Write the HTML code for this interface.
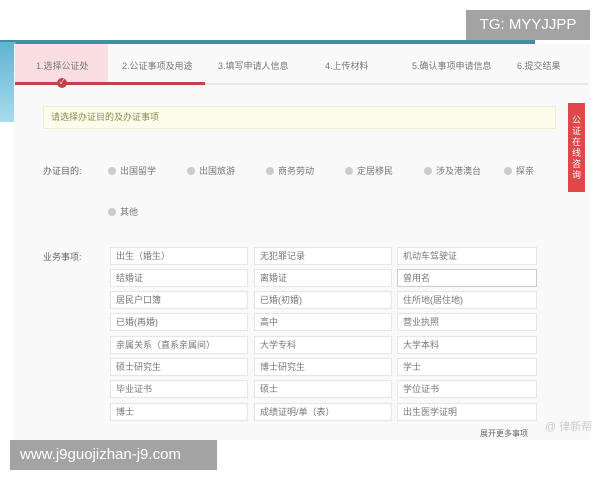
<!DOCTYPE html>
<html><head><meta charset="utf-8"><style>
*{margin:0;padding:0;box-sizing:border-box}
body{width:600px;height:480px;background:#fff;position:relative;overflow:hidden;font-family:"Liberation Sans","Noto Sans CJK SC",sans-serif;color:#666;font-size:9px}
.a{position:absolute}
.tab{position:absolute;top:59px;font-size:9px;color:#777}
.rad{position:absolute;font-size:9px;color:#777;display:flex;align-items:center;gap:4px}
.rad i{display:inline-block;width:8px;height:8px;border-radius:50%;background:#ccc}
.it{position:absolute;height:18px;background:#fff;border:1px solid #e6e6e6;font-size:9px;color:#777;padding-left:5px;line-height:16px}
</style></head><body>
<div class="a" style="left:466px;top:10px;width:124px;height:30px;background:#a3a3a3;color:#fff;font-size:15px;line-height:30px;text-align:center">TG: MYYJJPP</div>
<div class="a" style="left:0;top:40px;width:535px;height:4px;background:#3f8fa3"></div>
<div class="a" style="left:0;top:42px;width:16px;height:80px;background:linear-gradient(#5fb3d3,#a8dcec)"></div>
<div class="a" style="left:14px;top:44px;width:576px;height:396px;background:#f9f9f9"></div>
<div class="a" style="left:15px;top:44px;width:93px;height:40px;background:#fbdee2"></div>
<div class="tab" style="left:36px">1.选择公证处</div>
<div class="tab" style="left:122px">2.公证事项及用途</div>
<div class="tab" style="left:218px">3.填写申请人信息</div>
<div class="tab" style="left:325px">4.上传材料</div>
<div class="tab" style="left:412px">5.确认事项申请信息</div>
<div class="tab" style="left:517px">6.提交结果</div>
<div class="a" style="left:15px;top:83px;width:573px;height:2px;background:#e6e6e6"></div>
<div class="a" style="left:15px;top:82px;width:190px;height:3px;background:#c4404a"></div>
<div class="a" style="left:57px;top:78px;width:10px;height:10px;border-radius:50%;background:#c4404a;color:#fff;font-size:7px;line-height:10px;text-align:center">✓</div>
<div class="a" style="left:43px;top:106px;width:513px;height:23px;background:#fdfcec;border:1px solid #f0eed8;color:#8a8a50;font-size:9px;line-height:21px;padding-left:7px">请选择办证目的及办证事项</div>
<div class="a" style="left:568px;top:103px;width:17px;height:89px;background:#e0474a;color:#fff;font-size:9px;line-height:11px;text-align:center;padding-top:12px">公<br>证<br>在<br>线<br>咨<br>询</div>
<div class="a" style="left:43px;top:164px;font-size:9px;color:#666">办证目的:</div>
<div class="rad" style="left:108px;top:164px"><i></i>出国留学</div>
<div class="rad" style="left:187px;top:164px"><i></i>出国旅游</div>
<div class="rad" style="left:266px;top:164px"><i></i>商务劳动</div>
<div class="rad" style="left:345px;top:164px"><i></i>定居移民</div>
<div class="rad" style="left:424px;top:164px"><i></i>涉及港澳台</div>
<div class="rad" style="left:504px;top:164px"><i></i>探亲</div>
<div class="rad" style="left:108px;top:205px"><i></i>其他</div>
<div class="a" style="left:43px;top:250px;font-size:9px;color:#666">业务事项:</div>
<div class="it" style="left:110px;top:247px;width:138px">出生（婚生）</div>
<div class="it" style="left:254px;top:247px;width:138px">无犯罪记录</div>
<div class="it" style="left:397px;top:247px;width:140px">机动车驾驶证</div>
<div class="it" style="left:110px;top:269px;width:138px">结婚证</div>
<div class="it" style="left:254px;top:269px;width:138px">离婚证</div>
<div class="it" style="left:397px;top:269px;width:140px;border-color:#ccc">曾用名</div>
<div class="it" style="left:110px;top:291px;width:138px">居民户口簿</div>
<div class="it" style="left:254px;top:291px;width:138px">已婚(初婚)</div>
<div class="it" style="left:397px;top:291px;width:140px">住所地(居住地)</div>
<div class="it" style="left:110px;top:313px;width:138px">已婚(再婚)</div>
<div class="it" style="left:254px;top:313px;width:138px">高中</div>
<div class="it" style="left:397px;top:313px;width:140px">营业执照</div>
<div class="it" style="left:110px;top:336px;width:138px">亲属关系（直系亲属间）</div>
<div class="it" style="left:254px;top:336px;width:138px">大学专科</div>
<div class="it" style="left:397px;top:336px;width:140px">大学本科</div>
<div class="it" style="left:110px;top:358px;width:138px">硕士研究生</div>
<div class="it" style="left:254px;top:358px;width:138px">博士研究生</div>
<div class="it" style="left:397px;top:358px;width:140px">学士</div>
<div class="it" style="left:110px;top:380px;width:138px">毕业证书</div>
<div class="it" style="left:254px;top:380px;width:138px">硕士</div>
<div class="it" style="left:397px;top:380px;width:140px">学位证书</div>
<div class="it" style="left:110px;top:403px;width:138px">博士</div>
<div class="it" style="left:254px;top:403px;width:138px">成绩证明/单（表）</div>
<div class="it" style="left:397px;top:403px;width:140px">出生医学证明</div>
<div class="a" style="left:480px;top:428px;font-size:8px;color:#666">展开更多事项</div>
<div class="a" style="left:545px;top:418px;font-size:11px;color:#ccc">@ 律新帮</div>
<div class="a" style="left:10px;top:440px;width:207px;height:30px;background:#a3a3a3;color:#fff;font-size:15px;line-height:30px;padding-left:10px">www.j9guojizhan-j9.com</div>
</body></html>
